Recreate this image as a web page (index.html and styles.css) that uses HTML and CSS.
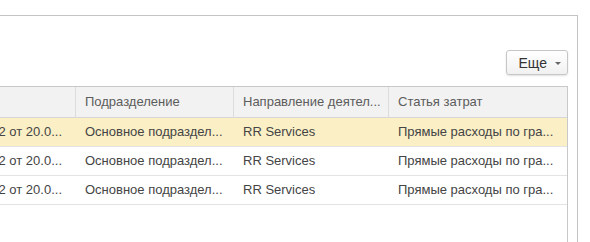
FILE: index.html
```html
<!DOCTYPE html>
<html lang="ru">
<head>
    <meta charset="UTF-8">
    <title>Распределение затрат</title>
    <link rel="stylesheet" href="styles.css">
</head>
<body>
    <div class="form-frame">
        <div class="toolbar">
            <button class="more-button">Еще <span class="more-arrow"></span></button>
        </div>

        <div class="grid-table">
            <div class="cell head first"></div>
            <div class="cell head">Подразделение</div>
            <div class="cell head">Направление деятел...</div>
            <div class="cell head">Статья затрат</div>

            <div class="cell first current">0000-000002 от 20.0...</div>
            <div class="cell current">Основное подраздел...</div>
            <div class="cell current">RR Services</div>
            <div class="cell current">Прямые расходы по гра...</div>

            <div class="cell first">0000-000002 от 20.0...</div>
            <div class="cell">Основное подраздел...</div>
            <div class="cell">RR Services</div>
            <div class="cell">Прямые расходы по гра...</div>

            <div class="cell first">0000-000002 от 20.0...</div>
            <div class="cell">Основное подраздел...</div>
            <div class="cell">RR Services</div>
            <div class="cell">Прямые расходы по гра...</div>
        </div>
    </div>
</body>
</html>
```

FILE: styles.css
```css
body {
    margin: 0;
    height: 100vh;
    font-family: 'Liberation Sans', Arial, sans-serif;
    font-size: 13px;
    background: #fff;
    overflow: hidden;
}

/* form frame, its left side runs past the window */
.form-frame {
    display: flex;
    flex-direction: column;
    box-sizing: border-box;
    width: 778px;
    height: calc(100vh - 15px);
    margin: 15px 0 0 -200px;
    padding: 34px 9px 0 10px;
    border: 1px solid #c4c4c4;
    border-bottom: none;
}

.toolbar {
    display: flex;
    justify-content: flex-end;
    margin-bottom: 11px;
}

.more-button {
    display: flex;
    align-items: center;
    gap: 8px;
    height: 25px;
    padding: 0 6px 0 12px;
    font-family: inherit;
    font-size: 14px;
    color: #333;
    background: linear-gradient(#ffffff, #f1f1f1);
    border: 1px solid #c6c6c6;
    border-radius: 3px;
    box-shadow: 0 1px 2px rgba(0, 0, 0, 0.12);
}

.more-arrow {
    width: 0;
    height: 0;
    border-left: 3px solid transparent;
    border-right: 3px solid transparent;
    border-top: 3px solid #666;
    margin-top: 1px;
}

/* table */
.grid-table {
    flex: 1;
    display: grid;
    grid-template-columns: 264px 158px 155px 1fr;
    align-content: start;
    border: 1px solid #c8c8c8;
    border-bottom: none;
}

.cell {
    height: 28px;
    line-height: 28px;
    padding: 0 9px;
    color: #444;
    white-space: nowrap;
    overflow: hidden;
    border-bottom: 1px solid #e3e3e3;
}

.cell.first {
    text-align: right;
    padding-right: 14px;
}

.cell.head {
    height: 30px;
    line-height: 30px;
    color: #5c5c5c;
    background: #f2f2f2;
    border-right: 1px solid #dcdcdc;
    border-bottom: 1px solid #d6d6d6;
}

.cell.head:nth-child(4) {
    border-right: none;
}

.cell.current {
    background: #fbefc6;
}
```
